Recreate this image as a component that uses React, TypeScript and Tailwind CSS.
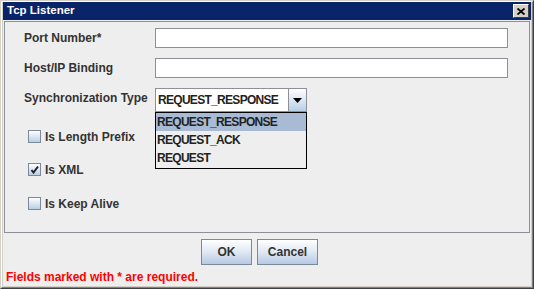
import React from "react";

const F = { fontFamily: '"Liberation Sans", Arial, sans-serif' };

function Check({ checked }: { checked?: boolean }) {
  return (
    <div className="w-[13px] h-[13px] border border-[#7a8a99] bg-gradient-to-b from-[#ffffff] to-[#b8cfe5] flex items-center justify-center">
      {checked && (
        <svg width="9" height="9" viewBox="0 0 9 9">
          <path d="M1.5 5 L3.5 7.5 L8 1.5" stroke="#222" strokeWidth="2" fill="none" />
        </svg>
      )}
    </div>
  );
}

export default function App() {
  return (
    <div style={F} className="w-[534px] h-[289px] border-t border-l border-[#d4d0c8] border-r border-r-[#404040] border-b border-b-[#404040]">
      <div className="w-full h-full border-t border-l border-white border-r border-r-[#808080] border-b border-b-[#808080] bg-[#d4d0c8] px-[1px] pb-[1px] flex flex-col">
        <div className="h-[18px] bg-[#0a246a] flex items-center justify-between pl-[4px] pr-[2px] shrink-0">
          <span className="text-white font-bold text-[11.5px] leading-none">Tcp Listener</span>
          <div className="w-[16px] h-[14px] bg-[#d4d0c8] border-t border-l border-white border-r border-r-[#404040] border-b border-b-[#404040] flex items-center justify-center">
            <svg width="8" height="7" viewBox="0 0 8 7">
              <path d="M0.5 0.5 L7.5 6.5 M7.5 0.5 L0.5 6.5" stroke="#000" strokeWidth="1.8" />
            </svg>
          </div>
        </div>
        <div className="flex-1 bg-[#eeeeee] flex flex-col pt-[1px]">
          <div className="relative h-[212px] mx-[1px] border border-[#8e8f99] pt-[6px] pl-[19px] text-[#333333] text-[12px] font-bold">
            <div className="flex items-center h-[20px]">
              <span className="w-[131px]">Port Number*</span>
              <div className="w-[353px] h-[20px] bg-white border border-[#8e8f99]" />
            </div>
            <div className="flex items-center h-[20px] mt-[10px]">
              <span className="w-[131px]">Host/IP Binding</span>
              <div className="w-[353px] h-[20px] bg-white border border-[#8e8f99]" />
            </div>
            <div className="flex items-center h-[24px] mt-[10px]">
              <span className="w-[131px] mt-[-4px]">Synchronization Type</span>
              <div className="w-[152px] h-[24px] border border-[#8e8f99] flex">
                <div className="flex-1 bg-white flex items-center pl-[2px] text-[#222] text-[12px] tracking-[-0.7px] border-r border-[#8e8f99]">REQUEST_RESPONSE</div>
                <div className="w-[17px] bg-gradient-to-b from-[#ffffff] to-[#b8cfe5] flex items-center justify-center">
                  <svg width="9" height="5" viewBox="0 0 9 5">
                    <path d="M0 0 L9 0 L4.5 5 Z" fill="#000" />
                  </svg>
                </div>
              </div>
            </div>
            <div className="flex items-center h-[13px] mt-[18px] pl-[4px] gap-[4px]">
              <Check />
              <span>Is Length Prefix</span>
            </div>
            <div className="flex items-center h-[13px] mt-[20px] pl-[4px] gap-[4px]">
              <Check checked />
              <span>Is XML</span>
            </div>
            <div className="absolute left-[150px] top-[90px] w-[152px] h-[57px] border border-black bg-[#eeeeee] flex flex-col text-[12px] tracking-[-0.7px] text-[#222]">
              <div className="h-[18px] bg-[#a9bbd4] flex items-center pl-[1px]">REQUEST_RESPONSE</div>
              <div className="h-[18px] flex items-center pl-[1px]">REQUEST_ACK</div>
              <div className="h-[18px] flex items-center pl-[1px]">REQUEST</div>
            </div>
            <div className="flex items-center h-[13px] mt-[21px] pl-[4px] gap-[4px]">
              <Check />
              <span>Is Keep Alive</span>
            </div>
          </div>
          <div className="flex pl-[198px] gap-[5px] mt-[6px] text-[12px] font-bold text-[#333333]">
            <div className="w-[51px] h-[26px] border border-[#7a8a99] bg-gradient-to-b from-[#ffffff] via-[#dfe8f3] to-[#b8c9e3] flex items-center justify-center">OK</div>
            <div className="w-[61px] h-[26px] border border-[#7a8a99] bg-gradient-to-b from-[#ffffff] via-[#dfe8f3] to-[#b8c9e3] flex items-center justify-center">Cancel</div>
          </div>
          <div className="mt-[5px] pl-[3px] text-[12px] font-bold text-[#ff0000] leading-[14px]">Fields marked with * are required.</div>
        </div>
      </div>
    </div>
  );
}
